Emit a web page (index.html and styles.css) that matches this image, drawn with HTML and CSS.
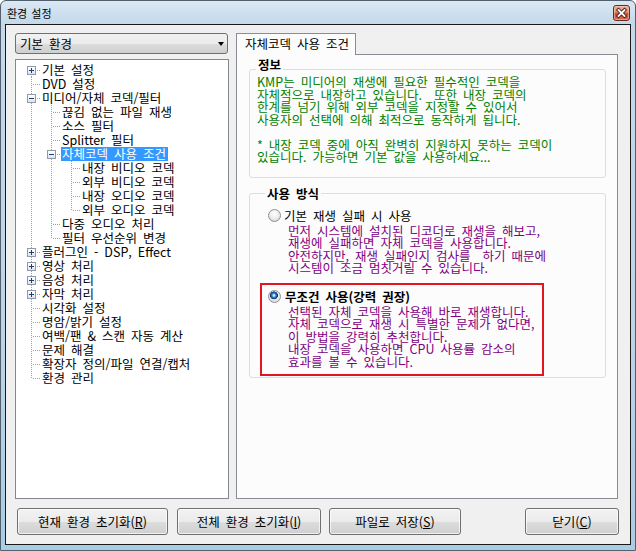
FILE: index.html
```html
<!DOCTYPE html>
<html lang="ko">
<head>
    <meta charset="UTF-8">
    <title>환경 설정</title>
    <link rel="stylesheet" href="styles.css">
</head>
<body>

    <div class="window">
        <div class="titlebar">
            <span class="title">환경 설정</span>
            <button class="close">
                <svg width="15" height="14" viewBox="0 0 15 14">
                    <path d="M4.5 4 L10.5 10 M10.5 4 L4.5 10" stroke="#4a1a10" stroke-width="3.6" stroke-linecap="square"/>
                    <path d="M4.5 4 L10.5 10 M10.5 4 L4.5 10" stroke="#fff" stroke-width="1.8" stroke-linecap="square"/>
                </svg>
            </button>
        </div>

        <div class="client">
            <div class="main">
                <!-- left side: profile + tree -->
                <div class="side">
                    <div class="combo">기본 환경</div>
                    <div class="tree">
                        <div class="row"><span class="c first"><b class="box plus"></b></span><span class="lbl">기본 설정</span></div>
                        <div class="row"><span class="c"></span><span class="lbl">DVD 설정</span></div>
                        <div class="row"><span class="c"><b class="box"></b></span><span class="lbl">미디어/자체 코덱/필터</span></div>
                        <div class="row"><i class="g v"></i><span class="c"></span><span class="lbl">끊김 없는 파일 재생</span></div>
                        <div class="row"><i class="g v"></i><span class="c"></span><span class="lbl">소스 필터</span></div>
                        <div class="row"><i class="g v"></i><span class="c"></span><span class="lbl">Splitter 필터</span></div>
                        <div class="row"><i class="g v"></i><span class="c"><b class="box"></b></span><span class="lbl sel">자체코덱 사용 조건</span></div>
                        <div class="row"><i class="g v"></i><i class="g v"></i><span class="c"></span><span class="lbl">내장 비디오 코덱</span></div>
                        <div class="row"><i class="g v"></i><i class="g v"></i><span class="c"></span><span class="lbl">외부 비디오 코덱</span></div>
                        <div class="row"><i class="g v"></i><i class="g v"></i><span class="c"></span><span class="lbl">내장 오디오 코덱</span></div>
                        <div class="row"><i class="g v"></i><i class="g v"></i><span class="c last"></span><span class="lbl">외부 오디오 코덱</span></div>
                        <div class="row"><i class="g v"></i><span class="c"></span><span class="lbl">다중 오디오 처리</span></div>
                        <div class="row"><i class="g v"></i><span class="c last"></span><span class="lbl">필터 우선순위 변경</span></div>
                        <div class="row"><span class="c"><b class="box plus"></b></span><span class="lbl">플러그인 - DSP, Effect</span></div>
                        <div class="row"><span class="c"><b class="box plus"></b></span><span class="lbl">영상 처리</span></div>
                        <div class="row"><span class="c"><b class="box plus"></b></span><span class="lbl">음성 처리</span></div>
                        <div class="row"><span class="c"><b class="box plus"></b></span><span class="lbl">자막 처리</span></div>
                        <div class="row"><span class="c"></span><span class="lbl">시각화 설정</span></div>
                        <div class="row"><span class="c"></span><span class="lbl">명암/밝기 설정</span></div>
                        <div class="row"><span class="c"></span><span class="lbl">여백/팬 &amp; 스캔 자동 계산</span></div>
                        <div class="row"><span class="c"></span><span class="lbl">문제 해결</span></div>
                        <div class="row"><span class="c"></span><span class="lbl">확장자 정의/파일 연결/캡처</span></div>
                        <div class="row"><span class="c last"></span><span class="lbl">환경 관리</span></div>
                    </div>
                </div>

                <!-- right side: tab page -->
                <div class="pane">
                    <div class="tab">자체코덱 사용 조건</div>
                    <div class="page">
                        <div class="group info">
                            <div class="legend">정보</div>
                            <p class="note">KMP는 미디어의 재생에 필요한 필수적인 코덱을<br>
                            자체적으로 내장하고 있습니다.&nbsp; 또한 내장 코덱의<br>
                            한계를 넘기 위해 외부 코덱을 지정할 수 있어서<br>
                            사용자의 선택에 의해 최적으로 동작하게 됩니다.<br>
                            <br>
                            * 내장 코덱 중에 아직 완벽히 지원하지 못하는 코덱이<br>
                            있습니다. 가능하면 기본 값을 사용하세요...</p>
                        </div>

                        <div class="group usage">
                            <div class="legend">사용 방식</div>
                            <div class="opt">
                                <label class="opt-head"><span class="radio"></span>기본 재생 실패 시 사용</label>
                                <p class="desc">먼저 시스템에 설치된 디코더로 재생을 해보고,<br>
                                재생에 실패하면 자체 코덱을 사용합니다.<br>
                                안전하지만, 재생 실패인지 검사를&nbsp; 하기 때문에<br>
                                시스템이 조금 멈칫거릴 수 있습니다.</p>
                            </div>
                            <div class="opt pick">
                                <label class="opt-head strong"><span class="radio on"></span>무조건 사용(강력 권장)</label>
                                <p class="desc">선택된 자체 코덱을 사용해 바로 재생합니다.<br>
                                자체 코덱으로 재생 시 특별한 문제가 없다면,<br>
                                이 방법을 강력히 추천합니다.<br>
                                내장 코덱을 사용하면 CPU 사용률 감소의<br>
                                효과를 볼 수 있습니다.</p>
                            </div>
                        </div>
                    </div>
                </div>
            </div>

            <div class="actions">
                <button class="btn b1">현재 환경 초기화(<u>R</u>)</button>
                <button class="btn b2">전체 환경 초기화(<u>I</u>)</button>
                <button class="btn b3">파일로 저장(<u>S</u>)</button>
                <button class="btn b4">닫기(<u>C</u>)</button>
            </div>
        </div>
    </div>

</body>
</html>
```

FILE: styles.css
```css
* {
    box-sizing: border-box;
}
body {
    margin: 0;
    font-family: "Noto Sans CJK KR", "Noto Sans", sans-serif;
    font-size: 12.5px;
    color: #000;
    word-spacing: 2.5px;
}
p {
    margin: 0;
    white-space: nowrap;
}

/* window frame */
.window {
    width: 636px;
    height: 551px;
    display: flex;
    flex-direction: column;
    padding: 0 4px 5px;
    border: 1px solid #52606e;
    border-radius: 6px 6px 0 0;
    background: linear-gradient(180deg, #dbe8f4 0, #c4d9ea 22px, #bed4e7 60%, #a9cde2 100%);
}
.titlebar {
    height: 23px;
    display: flex;
    align-items: center;
    justify-content: space-between;
}
.title {
    padding-left: 2px;
    font-size: 11px;
    word-spacing: 1px;
}
.close {
    align-self: flex-start;
    width: 17px;
    height: 16px;
    margin: 4px 1px 0 0;
    padding: 0;
    border: 1px solid #6b2c1f;
    border-radius: 3px;
    background: linear-gradient(180deg, #eab2a0 0, #de8a70 45%, #c9492c 55%, #d9735a 100%);
    box-shadow: inset 0 0 0 1px rgba(255, 220, 200, 0.45);
    display: flex;
    align-items: center;
    justify-content: center;
}

.client {
    flex: 1;
    background: #f0f0f0;
    border: 1px solid #1a1a1a;
    padding: 8px 12px 9px 9px;
}
.main {
    display: grid;
    grid-template-columns: 214px 382px;
    column-gap: 7px;
    height: 466px;
}

/* left column */
.side {
    display: flex;
    flex-direction: column;
    gap: 5px;
}
.combo {
    width: 213px;
    height: 21px;
    padding: 2px 0 0 4px;
    line-height: 15px;
    border: 1px solid #707070;
    border-radius: 3px;
    background: linear-gradient(180deg, #f2f2f2 0, #ebebeb 50%, #dddddd 51%, #cfcfcf 100%);
    display: flex;
    justify-content: space-between;
}
.combo::after {
    content: "";
    margin: 6px 3px 0 0;
    border-left: 3.5px solid transparent;
    border-right: 3.5px solid transparent;
    border-top: 4px solid #000;
    height: 0;
}
.tree {
    flex: 1;
    background: #fff;
    border: 1px solid #828790;
    padding: 3px 0 0 5px;
}
.row {
    display: flex;
    height: 14px;
}
.g, .c {
    width: 20px;
    height: 14px;
    position: relative;
    flex: none;
}
.g.v::before, .c::before {
    content: "";
    position: absolute;
    left: 10px;
    top: 0;
    width: 1px;
    height: 14px;
    background: repeating-linear-gradient(180deg, #a0a0a0 0 1px, transparent 1px 2px);
}
.c.first::before {
    top: 7px;
    height: 7px;
}
.c.last::before {
    height: 8px;
}
.c::after {
    content: "";
    position: absolute;
    left: 12px;
    top: 7px;
    width: 8px;
    height: 1px;
    background: repeating-linear-gradient(90deg, #a0a0a0 0 1px, transparent 1px 2px);
}
.box {
    position: absolute;
    left: 6px;
    top: 3px;
    width: 9px;
    height: 9px;
    border: 1px solid #8e9aab;
    background: linear-gradient(180deg, #ffffff 0, #dfe3ea 100%);
    z-index: 1;
}
.box::before {
    content: "";
    position: absolute;
    left: 1px;
    top: 3px;
    width: 5px;
    height: 1px;
    background: #1f3f77;
}
.box.plus::after {
    content: "";
    position: absolute;
    left: 3px;
    top: 1px;
    width: 1px;
    height: 5px;
    background: #1f3f77;
}
.lbl {
    height: 14px;
    line-height: 14px;
    padding: 0 2px 0 1px;
    white-space: nowrap;
}
.lbl.sel {
    background: #3399ff;
    color: #fff;
}

/* right column */
.pane {
    display: flex;
    flex-direction: column;
}
.tab {
    width: 120px;
    height: 22px;
    margin-bottom: -1px;
    padding: 3px 0 0 8px;
    line-height: 14px;
    border: 1px solid #898c95;
    border-bottom: none;
    background: #fcfcfc;
    position: relative;
    z-index: 1;
}
.page {
    flex: 1;
    border: 1px solid #898c95;
    background: #fcfcfc;
    padding: 14px 0 0 12px;
}
.group {
    width: 357px;
    border: 1px solid #d5dfe5;
    border-radius: 3px;
}
.legend {
    width: fit-content;
    font-weight: bold;
    line-height: 13px;
    padding: 0 2px;
    background: #fcfcfc;
}
.info {
    padding: 0 8px 13px 7px;
}
.info .legend {
    margin: -12px 0 0 -1px;
}
.note {
    margin-top: 5px;
    line-height: 12.5px;
    color: #008000;
}
.usage {
    margin-top: 15px;
    padding: 0 0 1px 10px;
}
.usage .legend {
    margin: -7px 0 0 5px;
}
.opt {
    width: 284px;
    margin-top: 2px;
    padding: 5px 6px 6px;
    border: 2px solid transparent;
}
.opt.pick {
    margin-top: 0;
    border-color: #e3151e;
}
.opt-head {
    display: flex;
    align-items: center;
    gap: 3px;
    height: 13px;
    line-height: 13px;
}
.opt-head.strong {
    font-weight: bold;
    gap: 4px;
}
.radio {
    width: 13px;
    height: 13px;
    flex: none;
    border-radius: 50%;
    border: 1px solid #8c8f94;
    background: radial-gradient(circle at 50% 35%, #ffffff 0, #efefef 45%, #cdcdcd 100%);
}
.radio.on {
    background:
        radial-gradient(circle at 45% 40%, #c4ecff 0 0.8px, #3f8ed2 1.8px, #1c5598 3px, #0e2f5e 3.7px, transparent 4.2px),
        radial-gradient(circle at 50% 35%, #ffffff 0, #efefef 45%, #cdcdcd 100%);
}
.desc {
    margin: 3px 0 0 20px;
    line-height: 12.5px;
    color: #800080;
}

/* bottom buttons */
.actions {
    display: flex;
    margin: 9px -1px 0 0;
    padding-left: 2px;
    height: 27px;
}
.btn {
    height: 27px;
    font-family: inherit;
    font-size: 12.5px;
    color: #000;
    word-spacing: 2.5px;
    border: 1px solid #707070;
    border-radius: 3px;
    background: linear-gradient(180deg, #f2f2f2 0, #ebebeb 50%, #dddddd 51%, #cfcfcf 100%);
    box-shadow: inset 0 0 0 1px rgba(255, 255, 255, 0.7);
    padding: 0;
}
.b1 { width: 151px; }
.b2 { width: 144px; margin-left: 9px; }
.b3 { width: 132px; margin-left: 8px; }
.b4 { width: 94px; margin-left: auto; }
```
